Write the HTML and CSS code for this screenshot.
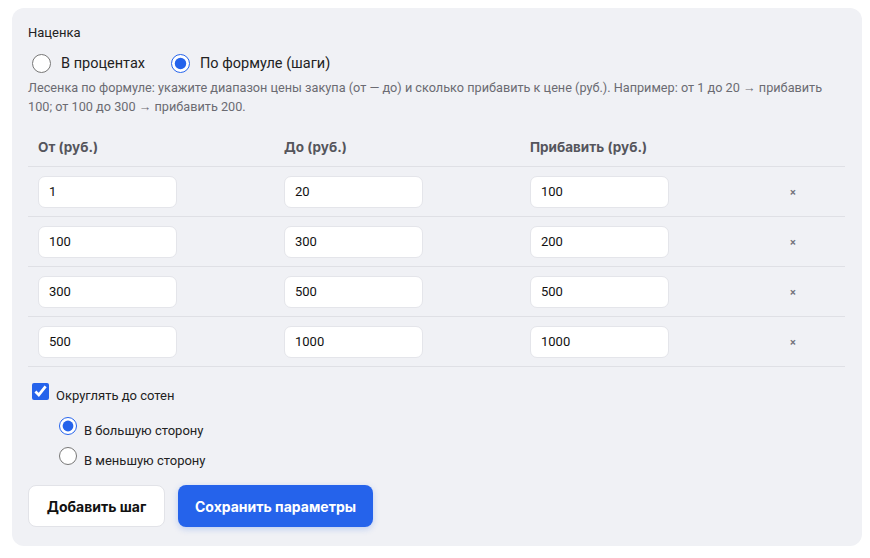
FILE: index.html
```html
<!DOCTYPE html>
<html lang="ru">
<head>
<meta charset="utf-8">
<link rel="stylesheet" href="styles.css">
</head>
<body>
<div class="panel">
  <div class="title">Наценка</div>
  <div class="mode-row">
    <label class="opt"><input type="radio" name="mode" class="radio-lg"><span>В процентах</span></label>
    <label class="opt"><input type="radio" name="mode" class="radio-lg" checked><span>По формуле (шаги)</span></label>
  </div>
  <p class="desc">Лесенка по формуле: укажите диапазон цены закупа (от — до) и сколько прибавить к цене (руб.). Например: от 1 до 20 → прибавить 100; от 100 до 300 → прибавить 200.</p>
  <div class="table">
    <div class="row head">
      <div class="cell">От (руб.)</div>
      <div class="cell">До (руб.)</div>
      <div class="cell">Прибавить (руб.)</div>
      <div class="cell"></div>
    </div>
    <div class="row">
      <div class="cell"><input class="field" value="1"></div>
      <div class="cell"><input class="field" value="20"></div>
      <div class="cell"><input class="field" value="100"></div>
      <div class="cell"><span class="del">×</span></div>
    </div>
    <div class="row">
      <div class="cell"><input class="field" value="100"></div>
      <div class="cell"><input class="field" value="300"></div>
      <div class="cell"><input class="field" value="200"></div>
      <div class="cell"><span class="del">×</span></div>
    </div>
    <div class="row">
      <div class="cell"><input class="field" value="300"></div>
      <div class="cell"><input class="field" value="500"></div>
      <div class="cell"><input class="field" value="500"></div>
      <div class="cell"><span class="del">×</span></div>
    </div>
    <div class="row">
      <div class="cell"><input class="field" value="500"></div>
      <div class="cell"><input class="field" value="1000"></div>
      <div class="cell"><input class="field" value="1000"></div>
      <div class="cell"><span class="del">×</span></div>
    </div>
  </div>
  <label class="check-row"><input type="checkbox" class="check" checked><span>Округлять до сотен</span></label>
  <div class="sub">
    <label class="sub-row"><input type="radio" name="round" class="radio-sm" checked><span>В большую сторону</span></label>
    <label class="sub-row"><input type="radio" name="round" class="radio-sm"><span>В меньшую сторону</span></label>
  </div>
  <div class="actions">
    <button class="btn btn-light">Добавить шаг</button>
    <button class="btn btn-primary">Сохранить параметры</button>
  </div>
</div>
</body>
</html>
```

FILE: styles.css
```css
* { box-sizing: border-box; }
html, body { margin: 0; padding: 0; background: #ffffff; }
body {
  font-family: "Roboto", "Liberation Sans", sans-serif;
  color: #1c1c1f;
  font-size: 13px;
}
.panel {
  margin: 8px 8px 12px 12px;
  width: 850px;
  height: 538px;
  background: #f0f1f5;
  border-radius: 12px;
  padding: 16px 17px 0 16px;
}
.title {
  font-size: 13px;
  line-height: 18px;
  color: #222;
}
.mode-row {
  margin-top: 10px;
  height: 22px;
  display: flex;
  align-items: center;
  gap: 26px;
  padding-left: 4px;
}
.opt {
  display: flex;
  align-items: center;
  gap: 10px;
  font-size: 14.5px;
  color: #222;
}
input[type="radio"], input[type="checkbox"] {
  accent-color: #2563eb;
  margin: 0;
}
.radio-lg { width: 19px; height: 19px; }
.desc {
  margin: 4px 0 0 0;
  font-size: 12.7px;
  line-height: 19px;
  color: #6b6b72;
}
.table {
  margin-top: 11px;
}
.row {
  display: grid;
  grid-template-columns: 246px 246px 258px 1fr;
  height: 50px;
  align-items: center;
  border-bottom: 1px solid #dfe0e5;
}
.row.head {
  height: 40px;
  font-family: "Inter", "Roboto", sans-serif;
  font-weight: 700;
  color: #55555c;
  font-size: 13.5px;
}
.cell { padding: 0 10px; }
.field {
  width: 139px;
  height: 32px;
  border: 1px solid #e4e5ea;
  border-radius: 7px;
  background: #fff;
  padding: 0 10px;
  font-family: inherit;
  font-size: 13px;
  color: #111;
  outline: none;
}
.del {
  display: inline-block;
  font-size: 11px;
  font-weight: 700;
  color: #74747c;
  margin-left: 2px;
}
.check-row {
  margin-top: 16px;
  height: 22px;
  display: flex;
  align-items: flex-start;
  gap: 7px;
  padding-left: 4px;
  font-size: 13px;
  color: #222;
}
.check-row span { padding-top: 5px; line-height: 16px; }
.check { width: 17px; height: 17px; margin-top: 1px; }
.sub {
  margin-top: 12px;
  padding-left: 31px;
  display: flex;
  flex-direction: column;
  gap: 8px;
}
.sub-row {
  height: 22px;
  display: flex;
  align-items: flex-start;
  gap: 7px;
  font-size: 13px;
  color: #222;
}
.sub-row span { padding-top: 6px; line-height: 16px; }
.radio-sm { width: 18px; height: 18px; }
.actions {
  margin-top: 16px;
  display: flex;
  gap: 13px;
}
.btn {
  height: 42px;
  border-radius: 8px;
  font-family: "Inter", "Roboto", sans-serif;
  font-size: 14px;
  font-weight: 700;
  padding: 0;
  cursor: pointer;
}
.btn-light {
  width: 137px;
  background: #fff;
  border: 1px solid #e2e3e8;
  color: #111;
}
.btn-primary {
  width: 195px;
  background: #2563eb;
  border: none;
  color: #fff;
  box-shadow: 0 2px 6px rgba(37, 99, 235, 0.25);
}
```
